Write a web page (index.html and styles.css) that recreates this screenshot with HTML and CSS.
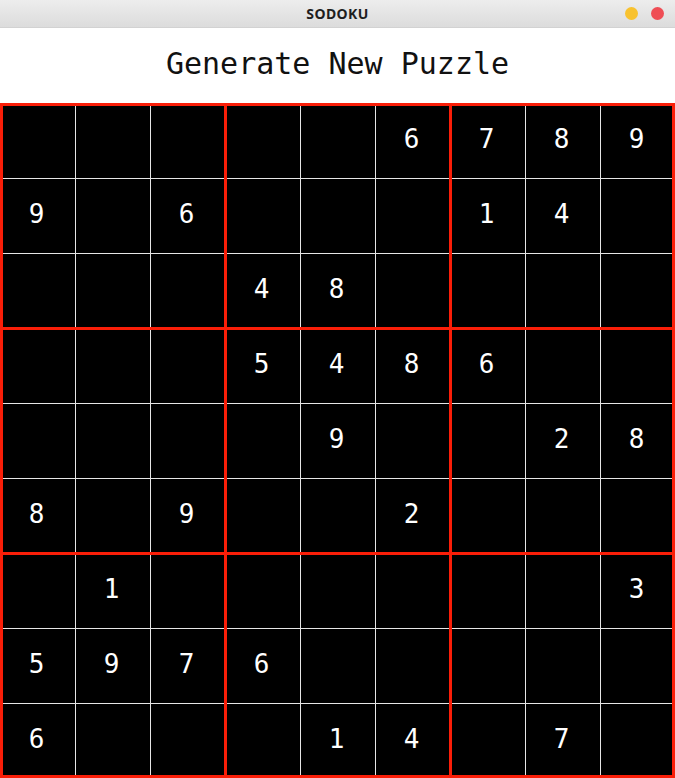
FILE: index.html
```html
<!DOCTYPE html>
<html lang="en">
<head>
<meta charset="utf-8">
<title>SODOKU</title>
<link rel="stylesheet" href="styles.css">
</head>
<body>
<div class="window">
  <header class="titlebar">
    <span class="title">SODOKU</span>
    <div class="controls">
      <span class="dot dot-min"></span>
      <span class="dot dot-close"></span>
    </div>
  </header>
  <button class="generate">Generate New Puzzle</button>
  <div class="board">
    <div class="cell"></div><div class="cell"></div><div class="cell"></div><div class="cell"></div><div class="cell"></div><div class="cell">6</div><div class="cell">7</div><div class="cell">8</div><div class="cell">9</div>
    <div class="cell">9</div><div class="cell"></div><div class="cell">6</div><div class="cell"></div><div class="cell"></div><div class="cell"></div><div class="cell">1</div><div class="cell">4</div><div class="cell"></div>
    <div class="cell"></div><div class="cell"></div><div class="cell"></div><div class="cell">4</div><div class="cell">8</div><div class="cell"></div><div class="cell"></div><div class="cell"></div><div class="cell"></div>
    <div class="cell"></div><div class="cell"></div><div class="cell"></div><div class="cell">5</div><div class="cell">4</div><div class="cell">8</div><div class="cell">6</div><div class="cell"></div><div class="cell"></div>
    <div class="cell"></div><div class="cell"></div><div class="cell"></div><div class="cell"></div><div class="cell">9</div><div class="cell"></div><div class="cell"></div><div class="cell">2</div><div class="cell">8</div>
    <div class="cell">8</div><div class="cell"></div><div class="cell">9</div><div class="cell"></div><div class="cell"></div><div class="cell">2</div><div class="cell"></div><div class="cell"></div><div class="cell"></div>
    <div class="cell"></div><div class="cell">1</div><div class="cell"></div><div class="cell"></div><div class="cell"></div><div class="cell"></div><div class="cell"></div><div class="cell"></div><div class="cell">3</div>
    <div class="cell">5</div><div class="cell">9</div><div class="cell">7</div><div class="cell">6</div><div class="cell"></div><div class="cell"></div><div class="cell"></div><div class="cell"></div><div class="cell"></div>
    <div class="cell">6</div><div class="cell"></div><div class="cell"></div><div class="cell"></div><div class="cell">1</div><div class="cell">4</div><div class="cell"></div><div class="cell">7</div><div class="cell"></div>
  </div>
</div>
</body>
</html>
```
FILE: styles.css
```css
html, body {
  margin: 0;
  padding: 0;
  background: #ffffff;
}

.window {
  width: 675px;
  height: 778px;
  display: flex;
  flex-direction: column;
  overflow: hidden;
}

.titlebar {
  height: 28px;
  flex: 0 0 28px;
  box-sizing: border-box;
  display: flex;
  align-items: center;
  justify-content: center;
  position: relative;
  background: linear-gradient(to bottom, #ededed, #dcdcdc);
  border-bottom: 1px solid #d2d2d2;
}

.title {
  font-family: "Noto Sans", "DejaVu Sans", sans-serif;
  font-weight: 700;
  font-size: 14px;
  color: #1e1e1e;
  letter-spacing: 0.4px;
}

.controls {
  position: absolute;
  right: 11px;
  top: 7px;
  display: flex;
  gap: 13px;
}

.dot {
  width: 13px;
  height: 13px;
  border-radius: 50%;
  display: block;
}

.dot-min {
  background: #f8c22f;
}

.dot-close {
  background: #ef4d55;
}

.generate {
  flex: 0 0 75px;
  height: 75px;
  width: 100%;
  margin: 0;
  padding: 0 0 4px 0;
  border: none;
  background: #ffffff;
  font-family: "DejaVu Sans Mono", monospace;
  font-size: 30px;
  color: #111111;
  text-align: center;
}

.board {
  position: relative;
  width: 675px;
  height: 675px;
  flex: 0 0 675px;
  background: #000000;
  display: grid;
  grid-template-columns: repeat(9, 75px);
  grid-template-rows: repeat(9, 75px);
}

.board::after {
  content: "";
  position: absolute;
  inset: 0;
  pointer-events: none;
  background:
    linear-gradient(to right,
      #fa1e08 0 3px, transparent 3px 224px,
      #fa1e08 224px 227px, transparent 227px 449px,
      #fa1e08 449px 452px, transparent 452px 672px,
      #fa1e08 672px 675px),
    linear-gradient(to bottom,
      #fa1e08 0 3px, transparent 3px 224px,
      #fa1e08 224px 227px, transparent 227px 449px,
      #fa1e08 449px 452px, transparent 452px 672px,
      #fa1e08 672px 675px);
}

.cell {
  box-sizing: border-box;
  border-left: 1px solid #e6e6e6;
  border-top: 1px solid #e6e6e6;
  display: flex;
  align-items: center;
  justify-content: center;
  color: #ffffff;
  font-family: "DejaVu Sans Mono", monospace;
  font-size: 26px;
  padding: 0 3px 4px 0;
}
```
